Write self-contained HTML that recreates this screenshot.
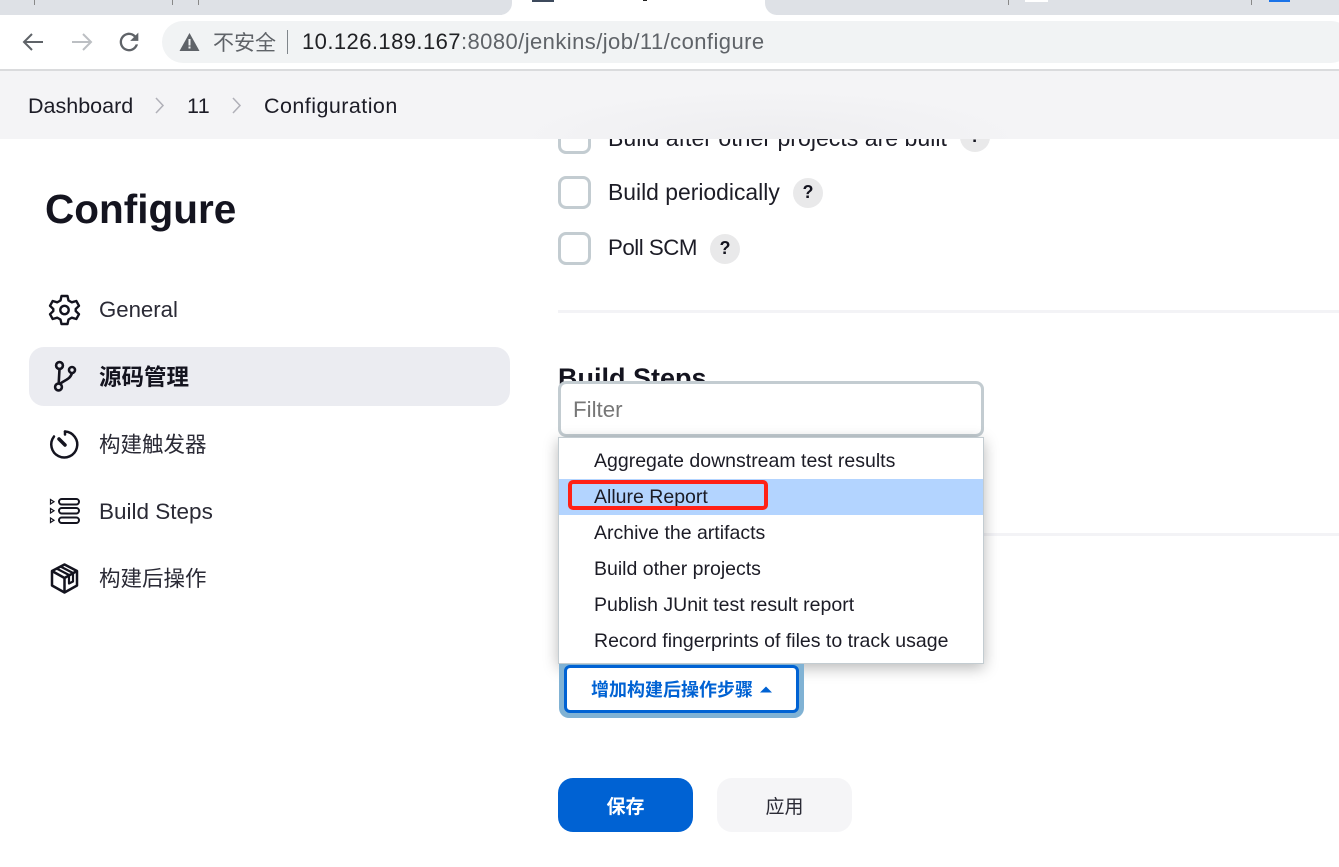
<!DOCTYPE html>
<html><head><meta charset="utf-8">
<style>
html,body{margin:0;padding:0;background:#fff;}
body{width:1339px;height:867px;position:relative;overflow:hidden;font-family:"Liberation Sans","Noto Sans CJK SC",sans-serif;color:#14141f;}
.a{position:absolute;white-space:nowrap;}
.t{font-size:22px;line-height:30px;}
.cb{position:absolute;left:558px;width:33px;height:33px;border:3px solid #c3ccd1;border-radius:8px;box-sizing:border-box;background:#fff;}
.q{position:absolute;width:30px;height:30px;border-radius:50%;background:#e9e9ea;font-weight:bold;font-size:18px;line-height:29px;text-align:center;color:#14141f;}
.m{position:absolute;left:594px;font-size:19.5px;line-height:24px;white-space:nowrap;color:#1c1c26;}
svg{position:absolute;overflow:visible;}
</style></head>
<body>
<!-- tab strip -->
<div class="a" style="left:0;top:0;width:1339px;height:15px;background:#dee1e6;"></div>
<div class="a" style="left:502px;top:0;width:274px;height:15px;background:#fff;"></div>
<div class="a" style="left:490px;top:0;width:22px;height:15px;background:#dee1e6;border-radius:0 0 12px 0;"></div>
<div class="a" style="left:765px;top:0;width:22px;height:15px;background:#dee1e6;border-radius:0 0 0 12px;"></div>
<div class="a" style="left:34px;top:0;width:1px;height:5px;background:#888;"></div>
<div class="a" style="left:172px;top:0;width:1px;height:5px;background:#888;"></div>
<div class="a" style="left:198px;top:0;width:1px;height:5px;background:#888;"></div>
<div class="a" style="left:1008px;top:0;width:1px;height:5px;background:#888;"></div>
<div class="a" style="left:1251px;top:0;width:1px;height:5px;background:#888;"></div>
<div class="a" style="left:1025px;top:0;width:23px;height:2px;background:#fff;"></div>
<div class="a" style="left:1269px;top:0;width:21px;height:2px;background:#1a73e8;"></div>
<div class="a" style="left:532px;top:0;width:22px;height:2px;background:#3d4a5c;"></div>
<div class="a" style="left:643px;top:0;width:4px;height:1px;background:#222;"></div>
<!-- toolbar -->
<div class="a" style="left:0;top:15px;width:1339px;height:54px;background:#fff;"></div>
<div class="a" style="left:0;top:69px;width:1339px;height:2px;background:#dadbdd;"></div>
<svg style="left:0;top:0" width="160" height="70" fill="none">
<path d="M43 42H24M32 34L24 42L32 50" stroke="#5f6368" stroke-width="2"/>
<path d="M72 42H91M83 34L91 42L83 50" stroke="#bcbfc3" stroke-width="2"/>
</svg>
<svg style="left:115px;top:28px" width="28" height="28" viewBox="0 0 24 24">
<path d="M17.65 6.35C16.2 4.9 14.21 4 12 4c-4.42 0-7.99 3.58-7.99 8s3.57 8 7.99 8c3.73 0 6.84-2.55 7.73-6h-2.08c-.82 2.33-3.04 4-5.65 4-3.31 0-6-2.69-6-6s2.69-6 6-6c1.66 0 3.14.69 4.22 1.78L13 11h7V4l-2.35 2.35z" fill="#5f6368"/>
</svg>
<div class="a" style="left:162px;top:21px;width:1190px;height:42px;background:#f1f3f4;border-radius:21px;"></div>
<svg style="left:0;top:0" width="210" height="60">
<path d="M189.500 33L199.500 51H179.500Z" fill="#5f6368"/>
<rect x="188.500" y="39" width="2" height="6.500" fill="#f1f3f4"/><rect x="188.500" y="46.500" width="2" height="2" fill="#f1f3f4"/>
</svg>
<div class="a" style="left:213px;top:30px;font-size:21px;line-height:28px;color:#5f6368;">不安全</div>
<div class="a" style="left:287px;top:30px;width:1px;height:24px;background:#80868b;"></div>
<div class="a" style="left:302px;top:28px;font-size:22px;letter-spacing:.43px;line-height:28px;color:#5f6368;"><span style="color:#202124">10.126.189.167</span>:8080/jenkins/job/11/configure</div>
<!-- breadcrumb bar -->
<div class="a" style="left:0;top:71px;width:1339px;height:68px;background:#f4f4f6;z-index:3;"></div>
<div class="a" style="left:520px;top:71px;width:500px;height:68px;z-index:3;background:radial-gradient(ellipse 260px 50px at 50% 100%,rgba(120,120,130,.05),rgba(120,120,130,0));"></div>
<div class="a" style="left:28px;top:91px;font-size:21.500px;line-height:30px;z-index:4;color:#1c1c26;">Dashboard</div>
<div class="a" style="left:187px;top:91px;font-size:21.500px;letter-spacing:.4px;line-height:30px;z-index:4;color:#1c1c26;">11</div>
<div class="a" style="left:264px;top:91px;font-size:21.500px;letter-spacing:.45px;line-height:30px;z-index:4;color:#1c1c26;">Configuration</div>
<svg style="left:0;top:0;z-index:4" width="250" height="120" fill="none">
<path d="M156 98L163 105.500L156 113M233 98L240 105.500L233 113" stroke="#b0b0b8" stroke-width="1.500"/>
</svg>
<!-- sidebar -->
<div class="a" style="left:45px;top:182px;font-size:40.500px;line-height:54px;font-weight:bold;color:#14141f;">Configure</div>
<div class="a" style="left:29px;top:347px;width:481px;height:59px;background:#ebecf1;border-radius:15px;"></div>
<svg style="left:48px;top:293px" width="34" height="34" viewBox="0 0 34 34" fill="none" stroke="#14141f" stroke-width="2.400" stroke-linejoin="round">
<circle cx="16.500" cy="17" r="4.200"/>
<path d="M13.500 3H19.500L20.500 7.500L23.800 9.300L28.300 8L31 12.800L27.700 16V18L31 21.200L28.300 26L23.800 24.700L20.500 26.500L19.500 31H13.500L12.500 26.500L9.200 24.700L4.700 26L2 21.200L5.300 18V16L2 12.800L4.700 8L9.200 9.300L12.500 7.500Z"/>
</svg>
<svg style="left:47px;top:360px" width="34" height="34" viewBox="0 0 34 34" fill="none" stroke="#14141f" stroke-width="2.600">
<circle cx="12.500" cy="5.500" r="3.400"/><circle cx="11.500" cy="27" r="3.400"/><circle cx="25" cy="10" r="3"/>
<path d="M12.500 9L11.700 23.500M13 24C17 20 23 20 25 13"/>
</svg>
<svg style="left:48px;top:428px" width="34" height="34" viewBox="0 0 34 34" fill="none" stroke="#14141f" stroke-width="2.500" stroke-linecap="round">
<path d="M17 3.500A13 13 0 1 1 6 8.500"/>
<path d="M17 3.500V6.500"/>
<path d="M11 11L17 17" stroke-width="3.500"/>
</svg>
<svg style="left:48px;top:495px" width="34" height="34" viewBox="0 0 34 34" fill="none" stroke="#14141f" stroke-width="2">
<rect x="11" y="4" width="20" height="5.500" rx="2.700"/><rect x="11" y="13" width="20" height="5.500" rx="2.700"/><rect x="11" y="22.500" width="20" height="5.500" rx="2.700"/>
<path d="M2.500 4.500L6 6.700L2.500 9ZM2.500 13.500L6 15.700L2.500 18ZM2.500 23L6 25.200L2.500 27.500Z" stroke-width="1.200"/>
</svg>
<svg style="left:48px;top:562px" width="34" height="34" viewBox="0 0 34 34" fill="none" stroke="#14141f" stroke-width="2.500" stroke-linejoin="round">
<path d="M16.500 2.500L29 9V23.500L16.500 30.500L4 23.500V9Z"/>
<path d="M4 9L16.500 16L29 9M16.500 16V30.500"/>
<path d="M8.500 6.500L21 13M12.500 4.500L25 11M21 13.500V21.500L25 19.500V11" stroke-width="2.200"/>
</svg>
<div class="a t" style="left:99px;top:295px;color:#2a2a35;font-size:22.200px;">General</div>
<div class="a t" style="left:99px;top:363px;font-weight:bold;font-size:22.500px;">源码管理</div>
<div class="a t" style="left:99px;top:430px;color:#2a2a35;font-size:21.500px;">构建触发器</div>
<div class="a t" style="left:99px;top:497px;color:#2a2a35;font-size:22.500px;">Build Steps</div>
<div class="a t" style="left:99px;top:564px;color:#2a2a35;font-size:21.500px;">构建后操作</div>
<!-- main -->
<div class="cb" style="top:121px;"></div>
<div class="a t" style="left:608px;top:123px;font-size:23.100px;color:#1c1c26;">Build after other projects are built</div>
<div class="q" style="left:960px;top:122px;">?</div>
<div class="cb" style="top:176px;"></div>
<div class="a t" style="left:608px;top:177px;font-size:22.900px;color:#1c1c26;">Build periodically</div>
<div class="q" style="left:793px;top:178px;">?</div>
<div class="cb" style="top:232px;"></div>
<div class="a t" style="left:608px;top:233px;font-size:22.300px;letter-spacing:-.5px;color:#1c1c26;">Poll SCM</div>
<div class="q" style="left:710px;top:234px;">?</div>
<div class="a" style="left:558px;top:310px;width:781px;height:3px;background:#f3f3f6;"></div>
<div class="a" style="left:558px;top:358px;font-size:27px;line-height:40px;font-weight:bold;">Build Steps</div>
<div class="a" style="left:558px;top:533px;width:781px;height:3px;background:#f3f3f6;"></div>
<!-- filter + dropdown -->
<div class="a" style="left:558px;top:381px;width:426px;height:56px;box-sizing:border-box;background:#fff;border:3px solid #c3ccd1;border-radius:8px;"></div>
<div class="a" style="left:573px;top:396px;font-size:22.300px;line-height:28px;color:#777;">Filter</div>
<div class="a" style="left:558px;top:437px;width:426px;height:227px;box-sizing:border-box;background:#fff;border:1px solid #c3ccd1;box-shadow:0 4px 14px rgba(0,0,0,.28);"></div>
<div class="a" style="left:559px;top:479px;width:424px;height:36px;background:#b3d4ff;"></div>
<div class="m" style="top:449px;">Aggregate downstream test results</div>
<div class="m" style="top:485px;">Allure Report</div>
<div class="m" style="top:521px;">Archive the artifacts</div>
<div class="m" style="top:557px;">Build other projects</div>
<div class="m" style="top:593px;">Publish JUnit test result report</div>
<div class="m" style="top:629px;">Record fingerprints of files to track usage</div>
<div class="a" style="left:568px;top:480px;width:200px;height:30px;box-sizing:border-box;border:4px solid #ff2116;border-radius:5px;"></div>
<!-- post-build button -->
<div class="a" style="left:559px;top:664px;width:245px;height:54px;background:#80b2d4;border-radius:0 0 10px 10px;"></div>
<div class="a" style="left:564px;top:665px;width:235px;height:48px;box-sizing:border-box;background:#fff;border:3px solid #0062d3;border-radius:6px;"></div>
<div class="a" style="left:591px;top:678px;font-size:18px;line-height:24px;font-weight:bold;color:#0062d3;">增加构建后操作步骤</div>
<svg style="left:760px;top:686px" width="13" height="7"><path d="M0 6.500L6 0.500L12 6.500Z" fill="#0062d3"/></svg>
<!-- footer buttons -->
<div class="a" style="left:558px;top:778px;width:135px;height:54px;background:#0062d3;border-radius:15px;color:#fff;font-weight:bold;font-size:19px;line-height:60px;text-align:center;">保存</div>
<div class="a" style="left:717px;top:778px;width:135px;height:54px;background:#f5f5f7;border-radius:15px;color:#2a2a35;font-size:19px;line-height:60px;text-align:center;">应用</div>
</body></html>
